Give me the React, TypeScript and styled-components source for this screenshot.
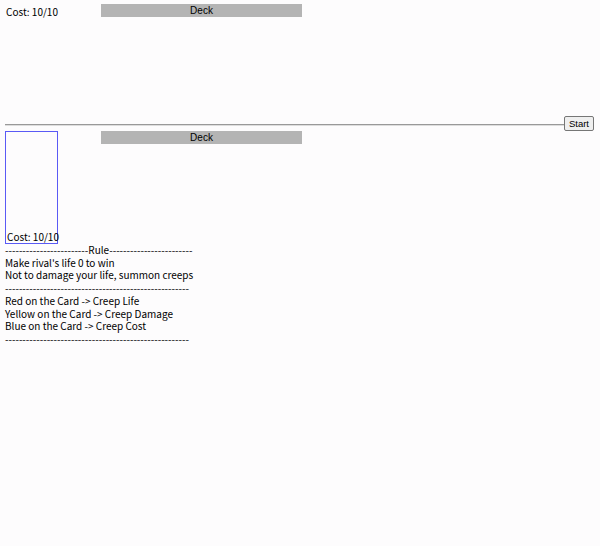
import styled, { createGlobalStyle } from 'styled-components';

const GlobalStyle = createGlobalStyle`
  body {
    margin: 0;
    background: #fdfcfd;
    color: #000;
    font-family: "Noto Sans CJK KR", "Noto Sans", sans-serif;
    font-size: 10px;
  }
`;

const Board = styled.div`
  display: flex;
  flex-direction: column;
  padding: 4px 6px 0 5px;
`;

const Field = styled.div<{ $height: number }>`
  display: flex;
  align-items: flex-start;
  height: ${(p) => p.$height}px;
`;

const Cost = styled.div`
  width: 95px;
  padding-left: 1px;
  line-height: 16px;
`;

const Deck = styled.div`
  width: 201px;
  height: 13px;
  background: #b4b4b4;
  text-align: center;
  font-family: "Liberation Sans", Arial, sans-serif;
  font-size: 10px;
  line-height: 13px;
`;

const Divider = styled.div`
  display: flex;
  align-items: center;
  height: 15px;
`;

const Line = styled.hr`
  flex: 1;
  margin: 2px 0 0;
  border: none;
  border-top: 1px solid #999;
  border-bottom: 1px solid #ddd;
`;

const StartButton = styled.button`
  height: 15px;
  padding: 0 4px;
  font-family: "Liberation Sans", Arial, sans-serif;
  font-size: 9.5px;
  border: 1px solid #767676;
  border-radius: 2px;
  background: #efefef;
`;

const Card = styled.div`
  width: 50px;
  height: 111px;
  border: 1px solid #5a5af5;
  display: flex;
  align-items: flex-end;
  margin-right: 43px;
  padding-left: 1px;
  white-space: nowrap;
  line-height: 13px;
`;

const Rules = styled.div`
  line-height: 12.7px;
  white-space: pre;
`;

const dashes = (n: number) => '-'.repeat(n);

const rules = [
  `${dashes(24)}Rule${dashes(24)}`,
  "Make rival's life 0 to win",
  'Not to damage your life, summon creeps',
  dashes(53),
  'Red on the Card -> Creep Life',
  'Yellow on the Card -> Creep Damage',
  'Blue on the Card -> Creep Cost',
  dashes(53),
];

export default function App() {
  return (
    <>
      <GlobalStyle />
      <Board>
        <Field $height={112}>
          <Cost>Cost: 10/10</Cost>
          <Deck>Deck</Deck>
        </Field>
        <Divider>
          <Line />
          <StartButton type="button">Start</StartButton>
        </Divider>
        <Field $height={113}>
          <Card>Cost: 10/10</Card>
          <Deck>Deck</Deck>
        </Field>
        <Rules>
          {rules.map((r, i) => (
            <div key={i}>{r}</div>
          ))}
        </Rules>
      </Board>
    </>
  );
}
